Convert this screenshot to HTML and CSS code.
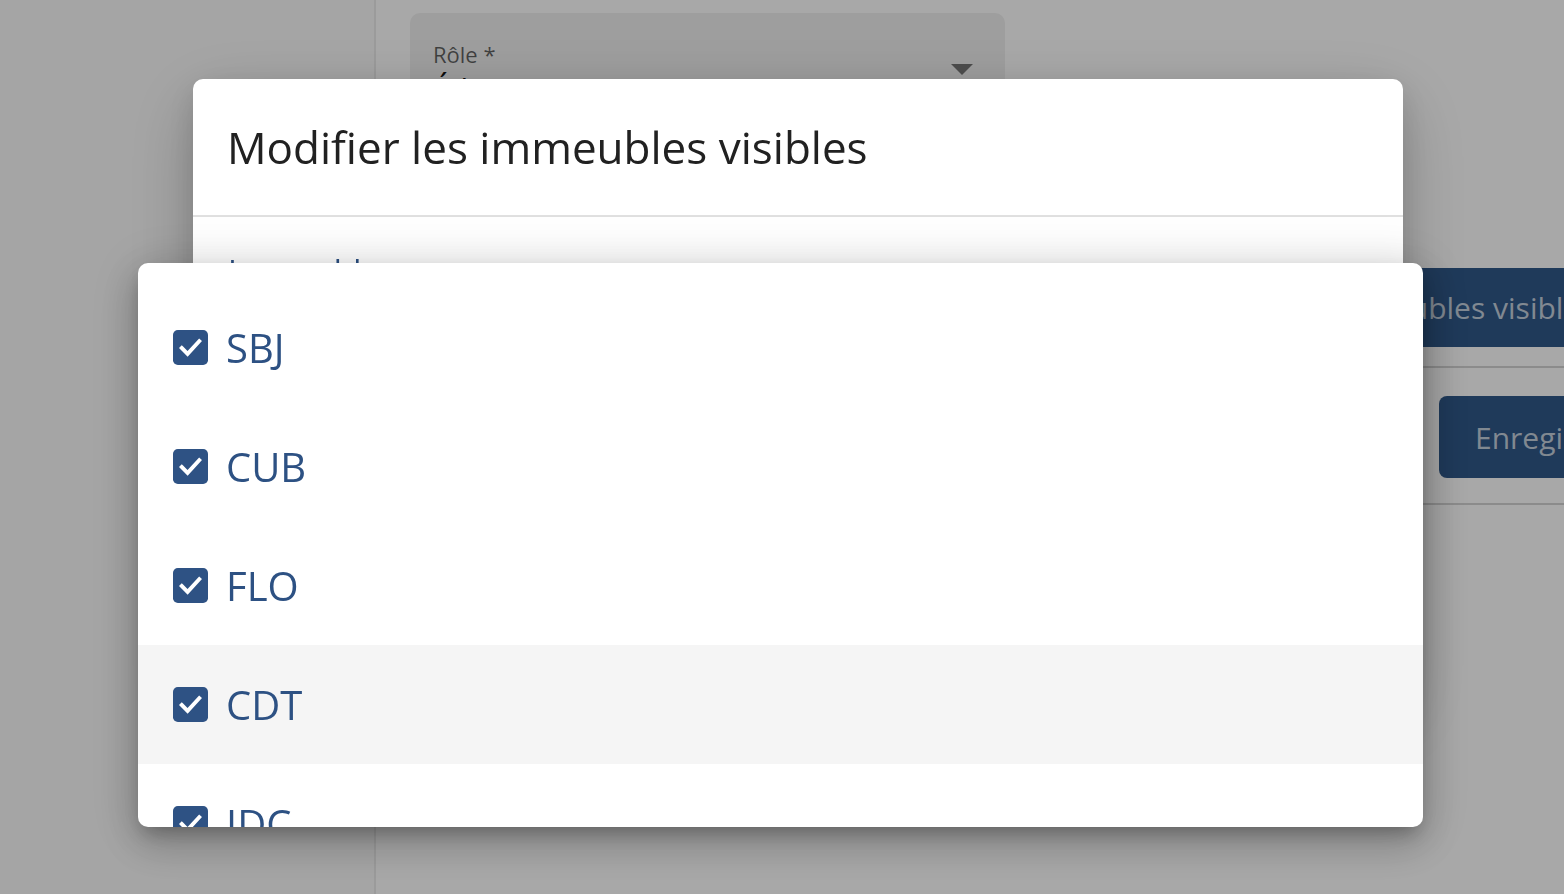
FILE: index.html
```html
<!DOCTYPE html>
<html lang="fr">

<head>
    <meta charset="UTF-8">
    <meta name="viewport" content="width=device-width, initial-scale=1.0">
    <title>Modifier les immeubles visibles</title>
    <link rel="stylesheet" href="styles.css">
</head>

<body>
    <div class="page">
        <aside class="sidebar"></aside>
        <main class="main">
            <div class="form">
                <div class="select">
                    <div class="select-text">
                        <span class="select-label">Rôle *</span>
                        <span class="select-value">Éditeur</span>
                    </div>
                    <span class="select-arrow"></span>
                </div>
            </div>
            <div class="actions">
                <button class="btn btn-wide">Immeubles visibles</button>
                <div class="actions-footer">
                    <button class="btn btn-save">Enregistrer</button>
                </div>
            </div>
        </main>
    </div>

    <div class="backdrop"></div>

    <div class="dialog">
        <h2 class="dialog-title">Modifier les immeubles visibles</h2>
        <div class="dialog-content">
            <label class="field-label">Immeubles</label>
        </div>
    </div>

    <ul class="menu">
        <li class="menu-item">
            <svg class="check" viewBox="0 0 36 36"><rect width="36" height="36" rx="5" /><polyline points="9,18.5 15,24.5 27,11.5" /></svg>
            <span>SBJ</span>
        </li>
        <li class="menu-item">
            <svg class="check" viewBox="0 0 36 36"><rect width="36" height="36" rx="5" /><polyline points="9,18.5 15,24.5 27,11.5" /></svg>
            <span>CUB</span>
        </li>
        <li class="menu-item">
            <svg class="check" viewBox="0 0 36 36"><rect width="36" height="36" rx="5" /><polyline points="9,18.5 15,24.5 27,11.5" /></svg>
            <span>FLO</span>
        </li>
        <li class="menu-item hover">
            <svg class="check" viewBox="0 0 36 36"><rect width="36" height="36" rx="5" /><polyline points="9,18.5 15,24.5 27,11.5" /></svg>
            <span>CDT</span>
        </li>
        <li class="menu-item">
            <svg class="check" viewBox="0 0 36 36"><rect width="36" height="36" rx="5" /><polyline points="9,18.5 15,24.5 27,11.5" /></svg>
            <span>IDC</span>
        </li>
    </ul>
</body>

</html>
```

FILE: styles.css
```css
* {
    padding: 0;
    margin: 0;
    box-sizing: border-box;
}

html,
body {
    height: 100%;
    overflow: hidden;
}

body {
    font-family: "Open Sans", "Noto Sans", sans-serif;
    background-color: #fff;
}

.page {
    display: flex;
    height: 100%;
}

.sidebar {
    flex: 0 0 376px;
    background-color: #fafafa;
    border-right: 2px solid #ebebeb;
}

.main {
    flex: 1;
    display: flex;
    padding-left: 34px;
    padding-top: 13px;
    background-color: #fff;
}

.form {
    flex: 0 0 595px;
}

.select {
    display: flex;
    align-items: center;
    justify-content: space-between;
    height: 110px;
    padding: 0 32px 0 23px;
    background-color: #f0f0f0;
    border-radius: 10px 10px 0 0;
}

.select-text {
    display: flex;
    flex-direction: column;
    align-self: flex-start;
    padding-top: 26px;
}

.select-label {
    font-size: 22px;
    line-height: 30px;
    color: rgba(0, 0, 0, 0.6);
}

.select-value {
    font-size: 30px;
    line-height: 40px;
    color: #111;
}

.select-arrow {
    display: inline-block;
    margin-top: 2px;
    border-top: 11px solid #757575;
    border-left: 11px solid transparent;
    border-right: 11px solid transparent;
}

.actions {
    margin-left: 285px;
    padding-top: 255px;
    flex: 1;
    min-width: 400px;
}

.btn {
    display: block;
    border: none;
    font-family: inherit;
    color: rgba(255, 255, 255, 0.72);
    background-color: #2f5889;
    border-radius: 8px;
    white-space: nowrap;
}

.btn-wide {
    height: 79px;
    padding-left: 39px;
    font-size: 30px;
    width: 420px;
    text-align: left;
    border-radius: 0;
}

.actions-footer {
    margin-top: 19px;
    padding: 28px 0 25px 149px;
    border-top: 2px solid #d4d4d4;
    border-bottom: 2px solid #d4d4d4;
}

.btn-save {
    height: 82px;
    padding: 0 36px;
    font-size: 30px;
    width: 300px;
    text-align: left;
}

.backdrop {
    position: fixed;
    inset: 0;
    background-color: rgba(0, 0, 0, 0.34);
}

.dialog {
    position: fixed;
    left: 193px;
    top: 79px;
    width: 1210px;
    height: 620px;
    background-color: #fff;
    border-radius: 10px;
    box-shadow: 0 22px 70px rgba(0, 0, 0, 0.22), 0 10px 30px rgba(0, 0, 0, 0.12);
}

.dialog-title {
    height: 138px;
    padding: 38px 34px 0;
    font-size: 44px;
    font-weight: 400;
    line-height: 60px;
    color: #212121;
    border-bottom: 2px solid #e0e0e0;
}

.dialog-content {
    padding: 33px 35px;
}

.field-label {
    font-size: 32px;
    line-height: 44px;
    color: #2d5183;
}

.menu {
    position: fixed;
    left: 138px;
    top: 263px;
    width: 1285px;
    height: 564px;
    padding-top: 25px;
    list-style: none;
    overflow: hidden;
    background-color: #fff;
    border-radius: 10px;
    box-shadow: 0 10px 20px -6px rgba(0, 0, 0, 0.3), 0 16px 40px 4px rgba(0, 0, 0, 0.16), 0 6px 50px 10px rgba(0, 0, 0, 0.1);
}

.menu-item {
    display: flex;
    align-items: center;
    gap: 18px;
    height: 119px;
    padding-left: 35px;
    font-size: 40px;
    color: #2d5183;
}

.menu-item.hover {
    background-color: #f5f5f5;
}

.check {
    width: 35px;
    height: 35px;
    flex: none;
}

.check rect {
    fill: #2e5284;
}

.check polyline {
    fill: none;
    stroke: #fff;
    stroke-width: 4;
    stroke-linecap: square;
}
```
